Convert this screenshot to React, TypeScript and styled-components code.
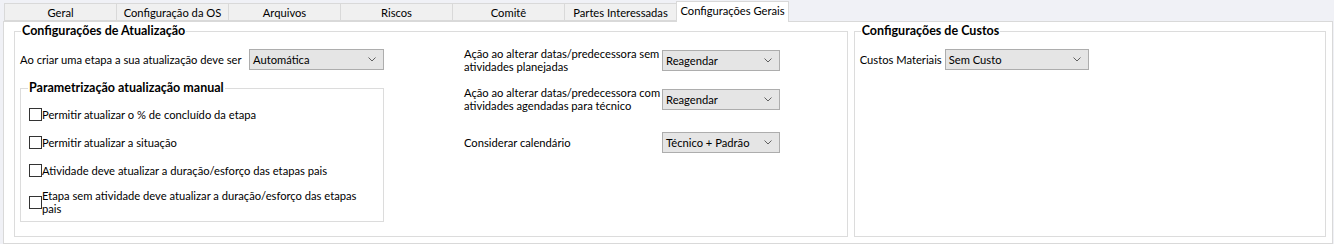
import React from 'react';
import styled, { createGlobalStyle } from 'styled-components';

const GlobalStyle = createGlobalStyle`
  html, body {
    margin: 0;
    padding: 0;
    background: #f0f1f6;
    font-family: Lato, "Noto Sans", sans-serif;
    font-size: 11.2px;
    color: #000;
  }
`;

const Window = styled.div`
  width: 1334px;
  height: 244px;
  box-sizing: border-box;
  padding: 1px 1px 0 3px;
  display: flex;
  flex-direction: column;
`;

const TabBar = styled.div`
  display: flex;
  align-items: flex-end;
  height: 20px;
  padding-left: 1px;
  position: relative;
  z-index: 1;
`;

const Tab = styled.div<{ $active?: boolean }>`
  box-sizing: border-box;
  width: 113px;
  height: ${p => (p.$active ? 21 : 18)}px;
  margin-bottom: ${p => (p.$active ? -1 : 0)}px;
  margin-left: -1px;
  border: 1px solid #d9d9d9;
  border-bottom: ${p => (p.$active ? 'none' : '1px solid #d9d9d9')};
  background: ${p => (p.$active ? '#ffffff' : '#f0f0f0')};
  display: flex;
  align-items: center;
  justify-content: center;
  padding-bottom: ${p => (p.$active ? 3 : 0)}px;
  white-space: nowrap;
  &:first-child { margin-left: 0; }
`;

const Panel = styled.div`
  flex: 1;
  box-sizing: border-box;
  background: #fff;
  border: 1px solid #d9d9d9;
  padding: 2px 6px 6px 10px;
  display: flex;
  gap: 6px;
`;

const Group = styled.fieldset<{ $width: number }>`
  width: ${p => p.$width}px;
  box-sizing: border-box;
  margin: 0;
  border: 1px solid #dcdcdc;
  padding: 4px 5px 6px 5px;
  min-width: 0;
`;

const Legend = styled.legend<{ $indent?: number }>`
  font-weight: bold;
  font-size: 12.5px;
  padding: 0 1px;
  margin-left: ${p => p.$indent ?? 1}px;
  line-height: 14px;
`;

const GroupBody = styled.div`
  display: flex;
  gap: 80px;
`;

const Column = styled.div<{ $width?: number }>`
  display: flex;
  flex-direction: column;
  width: ${p => (p.$width ? `${p.$width}px` : 'auto')};
`;

const Row = styled.div<{ $mt?: number }>`
  display: flex;
  align-items: center;
  margin-top: ${p => p.$mt ?? 0}px;
`;

const Label = styled.div<{ $width?: number }>`
  width: ${p => (p.$width ? `${p.$width}px` : 'auto')};
  line-height: 13px;
  margin-right: 6px;
  white-space: nowrap;
`;

const Select = styled.div<{ $width: number }>`
  box-sizing: border-box;
  width: ${p => p.$width}px;
  height: 21px;
  background: #e5e5e5;
  border: 1px solid #adadad;
  display: flex;
  align-items: center;
  justify-content: space-between;
  padding: 0 7px 0 3px;
  white-space: nowrap;
`;

const Chevron = () => (
  <svg width="8" height="5" viewBox="0 0 8 5">
    <path d="M0.5 0.5 L4 4 L7.5 0.5" fill="none" stroke="#606060" strokeWidth="1" />
  </svg>
);

const SubGroup = styled.fieldset`
  width: 364px;
  box-sizing: border-box;
  margin: 11px 0 0 0;
  border: 1px solid #dcdcdc;
  padding: 2px 8px 6px 8px;
  min-width: 0;
`;

const CheckRow = styled.label<{ $mt?: number }>`
  display: flex;
  align-items: center;
  margin-top: ${p => p.$mt ?? 0}px;
  line-height: 13px;
  white-space: nowrap;
`;

const Box = styled.span`
  width: 13px;
  height: 13px;
  box-sizing: border-box;
  border: 1px solid #333;
  background: #fff;
  flex-shrink: 0;
`;

const Field = ({ label, width, value, selWidth, mt }: { label: React.ReactNode; width?: number; value: string; selWidth: number; mt?: number }) => (
  <Row $mt={mt}>
    <Label $width={width}>{label}</Label>
    <Select $width={selWidth}>
      <span>{value}</span>
      <Chevron />
    </Select>
  </Row>
);

const Check = ({ children, mt }: { children: React.ReactNode; mt?: number }) => (
  <CheckRow $mt={mt}>
    <Box />
    <span>{children}</span>
  </CheckRow>
);

const tabs = ['Geral', 'Configuração da OS', 'Arquivos', 'Riscos', 'Comitê', 'Partes Interessadas', 'Configurações Gerais'];

export default function App() {
  return (
    <>
      <GlobalStyle />
      <Window>
        <TabBar>
          {tabs.map((t, i) => (
            <Tab key={t} $active={i === tabs.length - 1}>{t}</Tab>
          ))}
        </TabBar>
        <Panel>
          <Group $width={835}>
            <Legend>Configurações de Atualização</Legend>
            <GroupBody>
              <Column $width={364}>
                <Field mt={7} width={223} label="Ao criar uma etapa a sua atualização deve ser" value="Automática" selWidth={135} />
                <SubGroup>
                  <Legend $indent={-1}>Parametrização atualização manual</Legend>
                  <Check mt={11}>Permitir atualizar o % de concluído da etapa</Check>
                  <Check mt={15}>Permitir atualizar a situação</Check>
                  <Check mt={15}>Atividade deve atualizar a duração/esforço das etapas pais</Check>
                  <Check mt={12}>Etapa sem atividade deve atualizar a duração/esforço das etapas<br />pais</Check>
                </SubGroup>
              </Column>
              <Column>
                <Field width={192} label={<>Ação ao alterar datas/predecessora sem<br />atividades planejadas</>} value="Reagendar" selWidth={118} mt={5} />
                <Field width={192} label={<>Ação ao alterar datas/predecessora com<br />atividades agendadas para técnico</>} value="Reagendar" selWidth={118} mt={13} />
                <Field width={192} label="Considerar calendário" value="Técnico + Padrão" selWidth={118} mt={20} />
              </Column>
            </GroupBody>
          </Group>
          <Group $width={473}>
            <Legend>Configurações de Custos</Legend>
            <Field mt={7} width={79} label="Custos Materiais" value="Sem Custo" selWidth={144} />
          </Group>
        </Panel>
      </Window>
    </>
  );
}
